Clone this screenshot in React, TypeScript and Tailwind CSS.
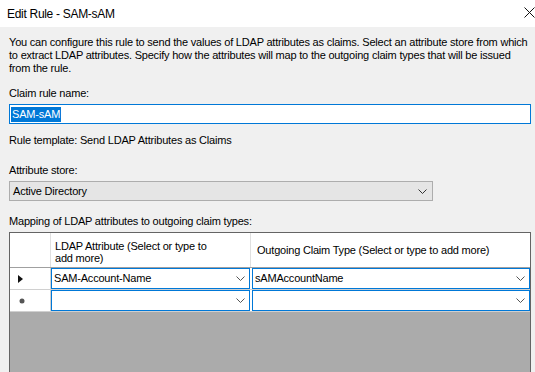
const font = { fontFamily: '"Liberation Sans", Arial, sans-serif' }

function Chevron({ color = '#333' }: { color?: string }) {
    return (
        <svg width="9" height="5" viewBox="0 0 9 5" className="shrink-0">
            <polyline
                points="0.5,0.5 4.5,4.5 8.5,0.5"
                fill="none"
                stroke={color}
                strokeWidth="1"
            />
        </svg>
    )
}

function GridCombo({ value, wide }: { value: string; wide?: boolean }) {
    return (
        <div
            className={
                'h-full flex items-center justify-between border border-[#0078d7] bg-white pl-[2px] pr-[4px] ' +
                (wide ? 'flex-1' : 'w-[199px]')
            }
        >
            <span className="whitespace-nowrap">{value}</span>
            <Chevron color="#555" />
        </div>
    )
}

export default function App() {
    return (
        <div
            className="w-[535px] h-[372px] bg-[#f0f0f0] overflow-hidden text-[11px] tracking-[-0.2px] text-black flex flex-col"
            style={font}
        >
            <div className="h-[27px] bg-white flex items-center justify-between pl-[7px] shrink-0">
                <span className="text-[12px] tracking-[-0.3px]">
                    Edit Rule - SAM-sAM
                </span>
                <svg width="11" height="11" viewBox="0 0 11 11" className="-mt-[2px]">
                    <path d="M0.5 0.5 L10.5 10.5 M10.5 0.5 L0.5 10.5" stroke="#111" strokeWidth="1" />
                </svg>
            </div>

            <div className="px-[9px] flex flex-col">
                <p className="pt-[9px] leading-[13px] whitespace-nowrap">
                    You can configure this rule to send the values of LDAP attributes as claims. Select an attribute store from which
                    <br />
                    to extract LDAP attributes. Specify how the attributes will map to the outgoing claim types that will be issued
                    <br />
                    from the rule.
                </p>

                <div className="mt-[11px] leading-[14px]">Claim rule name:</div>
                <div className="mt-[4px] h-[20px] w-[522px] border border-[#0078d7] bg-white flex items-center px-[1px]">
                    <span className="bg-[#0078d7] text-white leading-[15px] px-[1px]">SAM-sAM</span>
                </div>

                <div className="mt-[9px] leading-[14px]">Rule template: Send LDAP Attributes as Claims</div>

                <div className="mt-[16px] leading-[14px]">Attribute store:</div>
                <div className="mt-[4px] h-[20px] w-[424px] border border-[#adadad] bg-[#e5e5e5] flex items-center justify-between pl-[3px] pr-[5px]">
                    <span>Active Directory</span>
                    <Chevron />
                </div>

                <div className="mt-[13px] leading-[14px]">Mapping of LDAP attributes to outgoing claim types:</div>

                <div className="mt-[4px] w-[522px] h-[160px] border border-[#646464] bg-[#ababab] flex flex-col">
                    <div className="h-[35px] flex bg-white border-b border-[#a0a0a0]">
                        <div className="w-[41px] border-r border-[#e0e0e0]" />
                        <div className="w-[200px] border-r border-[#e0e0e0] pl-[4px] pt-[7px] leading-[12px]">
                            LDAP Attribute (Select or type to
                            <br />
                            add more)
                        </div>
                        <div className="flex-1 pl-[6px] flex items-center">
                            Outgoing Claim Type (Select or type to add more)
                        </div>
                    </div>
                    <div className="h-[22px] flex bg-white border-b border-[#d0d0d0]">
                        <div className="w-[41px] border-r border-[#d0d0d0] flex items-center pl-[8px]">
                            <svg width="5" height="8" viewBox="0 0 5 8">
                                <polygon points="0,0 5,4 0,8" fill="#111" />
                            </svg>
                        </div>
                        <div className="flex items-stretch flex-1 gap-[2px]">
                            <GridCombo value="SAM-Account-Name" />
                            <GridCombo value="sAMAccountName" wide />
                        </div>
                    </div>
                    <div className="h-[22px] flex bg-white border-b border-[#d0d0d0]">
                        <div className="w-[41px] border-r border-[#d0d0d0] flex items-center pl-[9px]">
                            <svg width="6" height="6" viewBox="0 0 6 6">
                                <circle cx="3" cy="3" r="2.5" fill="#555" />
                            </svg>
                        </div>
                        <div className="flex items-stretch flex-1 gap-[2px]">
                            <GridCombo value="" />
                            <GridCombo value="" wide />
                        </div>
                    </div>
                </div>
            </div>
        </div>
    )
}
